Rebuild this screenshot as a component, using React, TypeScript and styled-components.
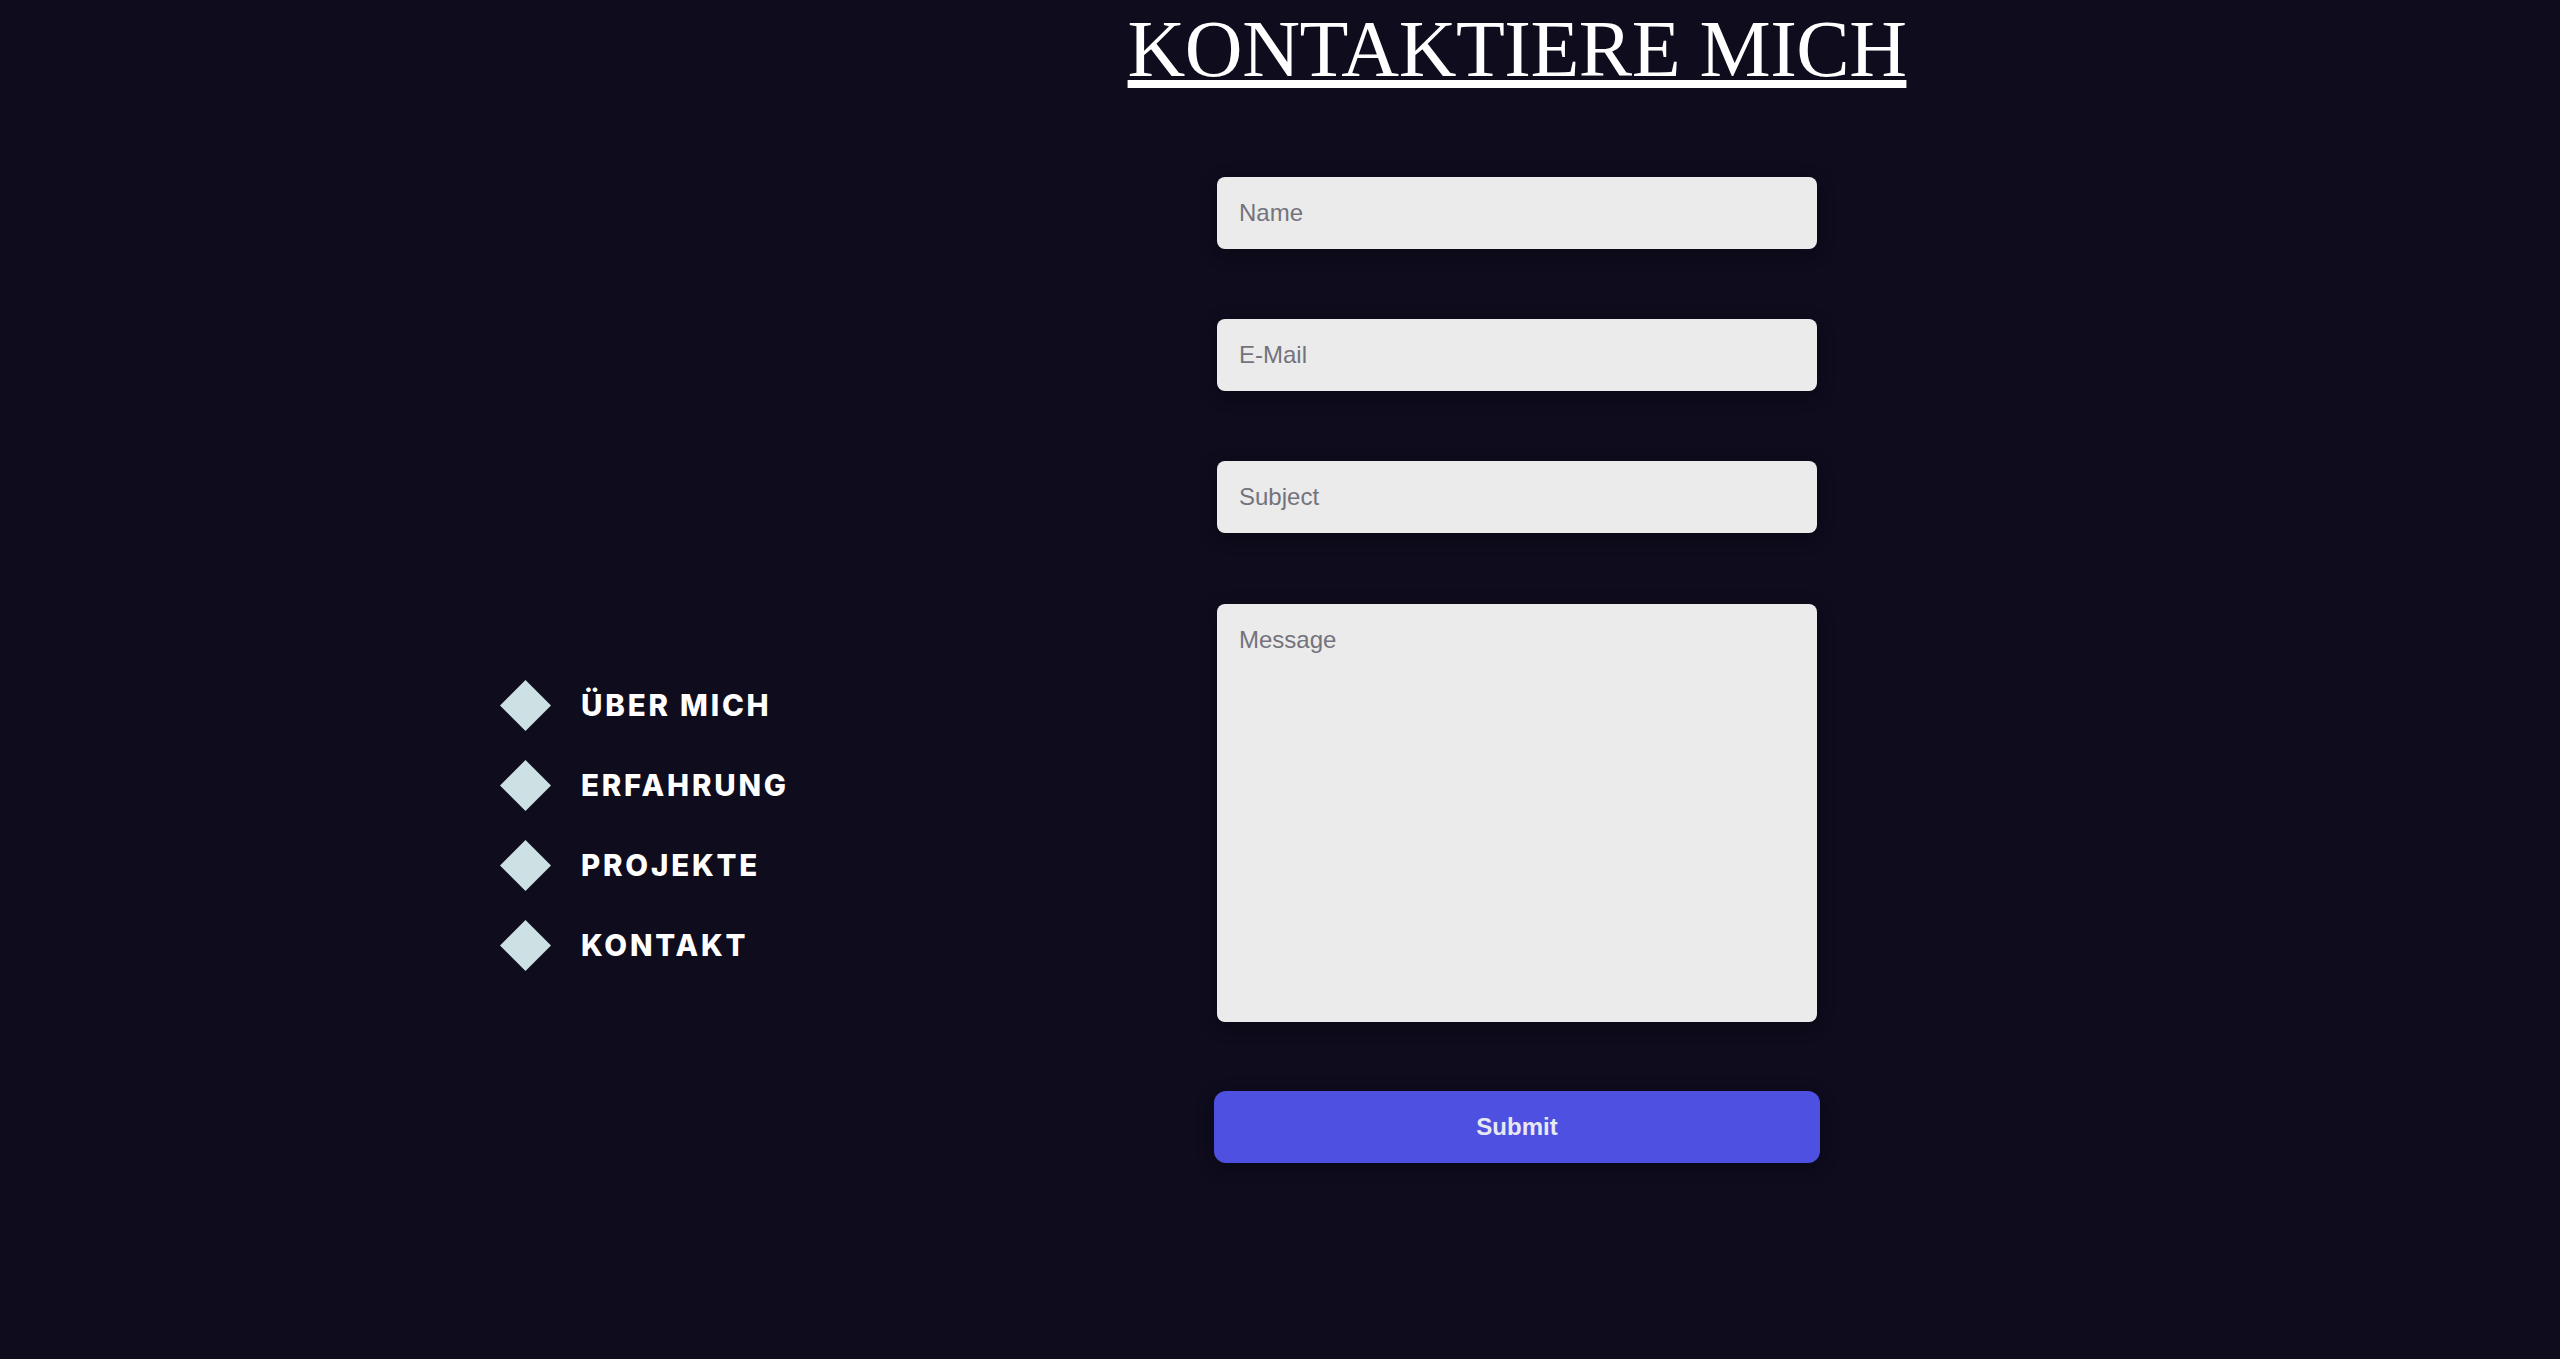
import React from "react";
import styled, { createGlobalStyle } from "styled-components";

const GlobalStyle = createGlobalStyle`
  html, body {
    margin: 0;
    padding: 0;
    background: #0e0c1d;
  }
  body {
    min-height: 1359px;
    font-family: "Liberation Sans", Arial, sans-serif;
  }
  * { box-sizing: border-box; }
`;

const Page = styled.div`
  display: flex;
  min-height: 1359px;
  background: #0e0c1d;
`;

const Sidebar = styled.aside`
  width: 950px;
  flex: none;
  padding-top: 665px;
  padding-left: 500px;
`;

const NavList = styled.nav`
  display: flex;
  flex-direction: column;
  width: max-content;
`;

const NavItem = styled.a`
  display: flex;
  align-items: center;
  gap: 30px;
  height: 80px;
  color: #ffffff;
  text-decoration: none;
  font-family: Inter, "Open Sans", sans-serif;
  font-weight: 800;
  font-size: 29.5px;
  letter-spacing: 2.8px;
  cursor: pointer;
`;

const Diamond = styled.svg`
  width: 51px;
  height: 51px;
  flex: none;
`;

const Main = styled.main`
  flex: 1;
  display: flex;
  flex-direction: column;
  align-items: center;
  padding-top: 4px;
  padding-right: 476px;
`;

const Title = styled.h1`
  margin: 0;
  font-family: "Liberation Serif", "Times New Roman", serif;
  font-weight: 400;
  font-size: 80px;
  letter-spacing: -0.5px;
  line-height: normal;
  color: #ffffff;
  text-decoration: underline;
`;

const Form = styled.form`
  margin-top: 82px;
  width: 600px;
  display: flex;
  flex-direction: column;
  align-items: stretch;
  gap: 70px;
`;

const fieldBase = `
  width: 100%;
  border: none;
  outline: none;
  border-radius: 8px;
  background: #ebebeb;
  padding: 0 22px;
  font-family: "Liberation Sans", Arial, sans-serif;
  font-size: 24px;
  color: #222;
  box-shadow: 0 4px 18px rgba(0, 0, 0, 0.28);
  &::placeholder {
    color: #74737d;
  }
`;

const Field = styled.input`
  ${fieldBase}
  height: 72px;
`;

const MessageField = styled.textarea`
  ${fieldBase}
  height: 418px;
  margin-top: 1px;
  padding: 22px;
  resize: none;
`;

const SubmitButton = styled.button`
  margin: -1px -3px 0;
  height: 72px;
  border: none;
  border-radius: 12px;
  background: #4d50e1;
  color: #e8e8f2;
  font-family: "Liberation Sans", Arial, sans-serif;
  font-weight: 700;
  font-size: 24px;
  cursor: pointer;
  box-shadow: 0 4px 18px rgba(0, 0, 0, 0.28);
`;

const navItems = ["ÜBER MICH", "ERFAHRUNG", "PROJEKTE", "KONTAKT"];

export default function App() {
  return (
    <>
      <GlobalStyle />
      <Page>
        <Sidebar>
          <NavList>
            {navItems.map((label) => (
              <NavItem key={label}>
                <Diamond viewBox="0 0 51 51" aria-hidden="true">
                  <polygon points="25.5,0 51,25.5 25.5,51 0,25.5" fill="#cde1e4" />
                </Diamond>
                {label}
              </NavItem>
            ))}
          </NavList>
        </Sidebar>
        <Main>
          <Title>KONTAKTIERE MICH</Title>
          <Form onSubmit={(e) => e.preventDefault()}>
            <Field type="text" placeholder="Name" />
            <Field type="email" placeholder="E-Mail" />
            <Field type="text" placeholder="Subject" />
            <MessageField placeholder="Message" />
            <SubmitButton type="submit">Submit</SubmitButton>
          </Form>
        </Main>
      </Page>
    </>
  );
}
